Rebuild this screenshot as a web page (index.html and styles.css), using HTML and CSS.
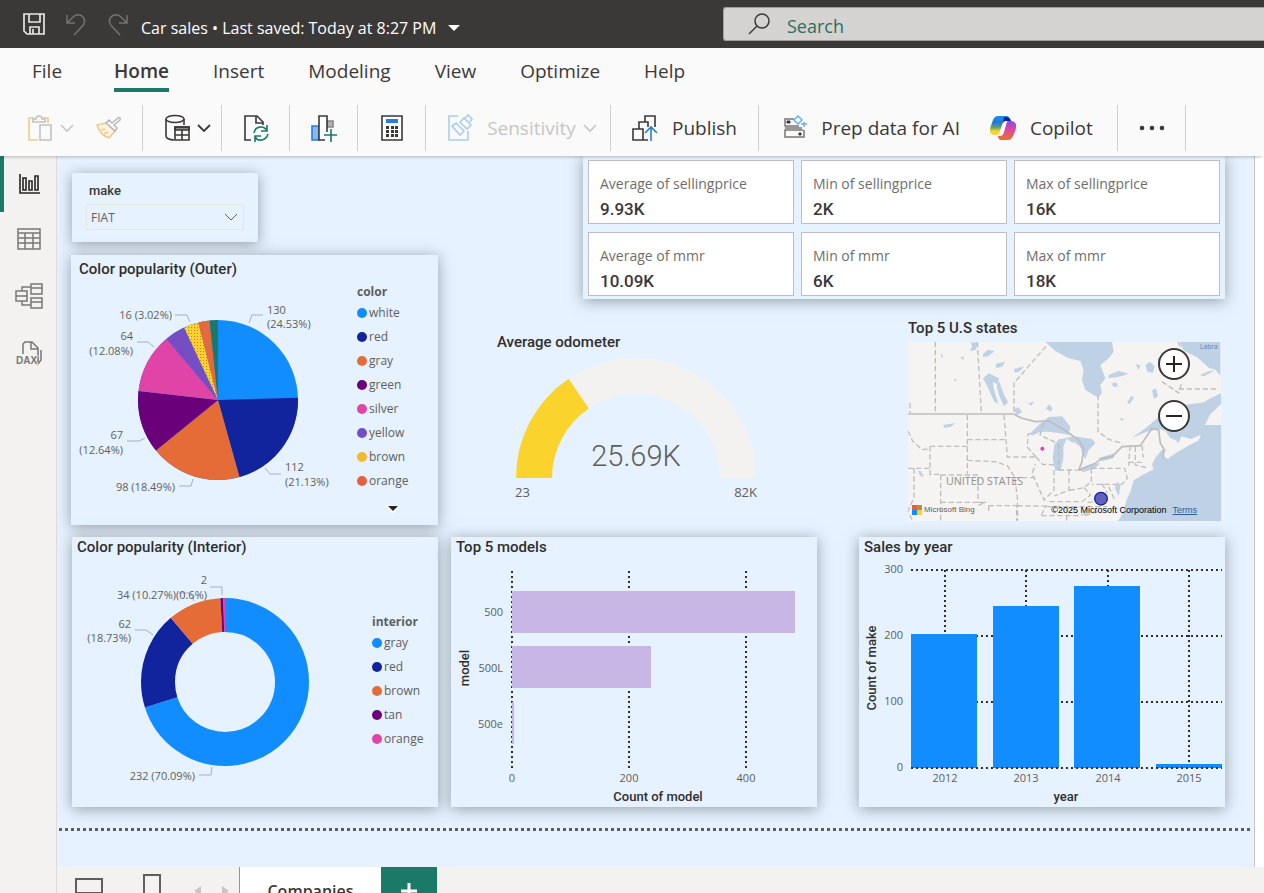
FILE: index.html
```html
<!DOCTYPE html>
<html lang="en">
<head>
<meta charset="UTF-8">
<title>Car sales</title>
<link rel="stylesheet" href="styles.css">
</head>
<body>
<header class="titlebar">
  <button class="tb-btn" aria-label="Save">
    <svg width="24" height="24" viewBox="0 0 24 24" fill="none" stroke="#e6e6e6" stroke-width="1.700"><path d="M2 2h20v20H5l-3-3zM7 2v8h11V2M8 22v-7h9v7M11 17v5"/></svg>
  </button>
  <button class="tb-btn" aria-label="Undo">
    <svg width="22" height="24" viewBox="0 0 22 24" fill="none" stroke="#767372" stroke-width="1.500"><path d="M2 3v8h8M2 11l6-6c3-3 7-3 9.500-.5 3 3 2.500 7 0 9.500L9 23"/></svg>
  </button>
  <button class="tb-btn" aria-label="Redo">
    <svg width="22" height="24" viewBox="0 0 22 24" fill="none" stroke="#767372" stroke-width="1.500"><path d="M19 3v8h-8M19 11l-6-6c-3-3-7-3-9.500-.5-3 3-2.500 7 0 9.500L12 23"/></svg>
  </button>
  <button class="file-name">Car sales • Last saved: Today at 8:27 PM
    <svg width="12" height="6" viewBox="0 0 12 6"><path d="M0 0h12L6 6z" fill="#fff"/></svg>
  </button>
  <label class="search">
    <svg width="24" height="24" viewBox="0 0 24 24" fill="none" stroke="#3b3838" stroke-width="1.500"><circle cx="14" cy="9" r="7"/><path d="M9 14L1 22"/></svg>
    <input type="text" placeholder="Search" aria-label="Search">
  </label>
</header>

<nav class="tabs">
  <a href="#">File</a>
  <a href="#" class="active">Home</a>
  <a href="#">Insert</a>
  <a href="#">Modeling</a>
  <a href="#">View</a>
  <a href="#">Optimize</a>
  <a href="#">Help</a>
</nav>

<div class="toolbar">
  <div class="group group-clip">
    <button class="tool" aria-label="Paste">
      <svg width="26" height="28" viewBox="0 0 26 28" fill="none" stroke-width="1.600"><path d="M7 4H2v22h9M15 4h6v5" stroke="#ecca8e"/><path d="M6 8V5h3c0-4 6-4 6 0h3v3zM13 11h11v15H13z" stroke="#c4c2c0"/></svg>
      <svg class="chev" width="14" height="9" viewBox="0 0 14 9" fill="none" stroke="#c8c6c4" stroke-width="1.600"><path d="M1 1l6 6 6-6"/></svg>
    </button>
    <button class="tool" aria-label="Format painter">
      <svg width="26" height="24" viewBox="0 0 26 24" fill="none" stroke-width="1.500"><path d="M10 7L1 9c2 7 6 11 12 13l6-7z" fill="#fdf3df" stroke="#ecca8e"/><path d="M5 14l4-1M8 18l4-2" stroke="#ecca8e"/><path d="M10 7l9 8 2-3-3-3 6-5c1-2-1-3-2-2l-6 5-3-3z" stroke="#b9b7b5" fill="#fafafa"/></svg>
    </button>
  </div>
  <div class="group group-data">
    <button class="tool" aria-label="Get data">
      <svg width="26" height="28" viewBox="0 0 26 28" fill="none" stroke="#3b3838" stroke-width="1.600"><ellipse cx="11" cy="5" rx="9" ry="3.500"/><path d="M2 5v17c0 2 3 4 8 4M20 5v6"/><path d="M11 13h14v3H11z" fill="#8a8886"/><path d="M11 13h14v13H11zM18 16v10M11 21h14"/></svg>
      <svg class="chev" width="14" height="9" viewBox="0 0 14 9" fill="none" stroke="#3b3838" stroke-width="1.800"><path d="M1 1l6 6 6-6"/></svg>
    </button>
  </div>
  <div class="group">
    <button class="tool" aria-label="Refresh">
      <svg width="26" height="28" viewBox="0 0 26 28" fill="none" stroke="#3b3838" stroke-width="1.600"><path d="M8 26H2V2h12l6 6v3M13 2v7h7"/><path d="M11 19c1-7 10-8 13-2M24 11v6h-6M25 20c-2 7-10 8-13 3M12 28v-6h6" stroke="#1a7a67"/></svg>
    </button>
  </div>
  <div class="group">
    <button class="tool" aria-label="New visual">
      <svg width="26" height="28" viewBox="0 0 26 28" fill="none" stroke-width="1.600"><path d="M1 12h7v14H1z" fill="#83b9eb" stroke="#2b7cd3"/><path d="M16 7h6v6h-6z" fill="#b3b0ad" stroke="#8a8886"/><path d="M14 26H8V2h8v16" fill="#fff" stroke="#3b3838"/><path d="M20 15v13M13 21h13" stroke="#1a7a67"/></svg>
    </button>
  </div>
  <div class="group">
    <button class="tool" aria-label="Quick measure">
      <svg width="22" height="28" viewBox="0 0 22 28"><path d="M1 2h20v24H1z" fill="#fff" stroke="#3b3838" stroke-width="1.600"/><path d="M5 5h12v4H5z" fill="#2b7cd3"/><path d="M5 12h3v3H5zM10 12h3v3h-3zM14 12h3v3h-3zM5 16h3v3H5zM10 16h3v3h-3zM14 16h3v3h-3zM5 20h3v3H5zM10 20h3v3h-3zM14 20h3v3h-3z" fill="#3b3838"/></svg>
    </button>
  </div>
  <div class="group group-sens">
    <button class="tool disabled" disabled>
      <svg width="26" height="28" viewBox="0 0 26 28" fill="none" stroke="#a9cdf0" stroke-width="1.600"><path d="M11 2H2v24h19V17"/><path d="M5 12l4-3 8 8-4 4zM13 8l4-4 7 7-4 4zM18 4l3-3 4 4-2 3"/></svg>
      <span>Sensitivity</span>
      <svg class="chev" width="14" height="9" viewBox="0 0 14 9" fill="none" stroke="#c8c6c4" stroke-width="1.600"><path d="M1 1l6 6 6-6"/></svg>
    </button>
  </div>
  <div class="group">
    <button class="tool">
      <svg width="26" height="28" viewBox="0 0 26 28" fill="none" stroke="#3b3838" stroke-width="1.600"><path d="M1 15h10v11H1zM7 15V8h9v5M13 8V2h10v11M11 26h5"/><path d="M19 27V14M13 19l6-6 6 6" stroke="#2b7cd3"/></svg>
      <span>Publish</span>
    </button>
  </div>
  <div class="group group-ai">
    <button class="tool">
      <svg width="24" height="26" viewBox="0 0 24 26" fill="none" stroke="#797775" stroke-width="1.500"><path d="M11 4H2v7h14M20 15H2v7h19v-7M2 13h17"/><path d="M4 6h3v2H4zM16 18h2v2h-2z" fill="#3b3838" stroke="#3b3838" stroke-width="1"/><path d="M15 1l4 4-4 4-4-4z" stroke="#6aaef0"/><path d="M21 7v5M18 9h6" stroke="#6aaef0"/></svg>
      <span>Prep data for AI</span>
    </button>
    <button class="tool">
      <svg width="26" height="24" viewBox="0 0 26 24">
        <defs>
          <linearGradient id="cpA" x1="0" y1="0" x2="0" y2="1"><stop offset="0" stop-color="#1b8df0"/><stop offset=".35" stop-color="#2476d8"/><stop offset=".6" stop-color="#5fa36a"/><stop offset=".8" stop-color="#fad42c"/></linearGradient>
          <linearGradient id="cpB" x1="0" y1="0" x2="0" y2="1"><stop offset="0" stop-color="#8a50d8"/><stop offset=".45" stop-color="#e044a7"/><stop offset=".9" stop-color="#ea6a35"/></linearGradient>
        </defs>
        <path d="M18 5h3c4 0 6 3 5 7-1 4-2 6-3 8-1 2-2 4-5 4h-7c-2 0-3-2-3-4h2c2 0 3-1 4-4l2-7c1-3 1-4 2-4z" fill="url(#cpB)"/>
        <path d="M8 0h8c3 0 4 2 5 5h-5c-2 0-3 1-4 4l-2 6c-1 3-2 4-4 4H4c-3 0-5-3-4-6 1-4 2-6 3-9 1-2 2-4 5-4z" fill="url(#cpA)"/>
        <path d="M14 1h2c3 0 4 2 5 4h-5c-1 0-2 0-3 2z" fill="#12239e"/>
      </svg>
      <span>Copilot</span>
    </button>
  </div>
  <div class="group">
    <button class="tool" aria-label="More options">
      <svg width="26" height="6" viewBox="0 0 26 6" fill="#3b3838"><circle cx="3" cy="3" r="2.300"/><circle cx="13" cy="3" r="2.300"/><circle cx="23" cy="3" r="2.300"/></svg>
    </button>
  </div>
</div>

<div class="workspace">
  <aside class="rail">
    <button class="active" aria-label="Report view">
      <svg width="22" height="22" viewBox="0 0 22 22" fill="none" stroke="#252423" stroke-width="1.600"><path d="M2 1v19h20M5 5h3v12H5zM11 8h3v9h-3zM17 3h3v14h-3z"/></svg>
    </button>
    <button aria-label="Table view">
      <svg width="24" height="24" viewBox="0 0 24 24" fill="none" stroke="#797775" stroke-width="1.500"><path d="M1 1h22v20H1zM1 5h22M1 10h22M1 15h22M8 5v16M16 5v16"/></svg>
    </button>
    <button aria-label="Model view">
      <svg width="28" height="28" viewBox="0 0 28 28" fill="none" stroke="#797775" stroke-width="1.500"><path d="M1 9h11v10H1zM1 14h11M16 2h11v10H16zM16 6h11M16 16h11v10H16zM16 20h11M7 9V5h9M7 19v4h9"/></svg>
    </button>
    <button aria-label="DAX query view">
      <svg width="26" height="30" viewBox="0 -4 26 30" fill="none" stroke="#797775" stroke-width="1.500"><path d="M7 13V3l2-2h7l6 6v13l-3 2M15 1v7h7M25 9v10l-4 5"/><text x="0" y="23" class="dax">DAX</text></svg>
    </button>
  </aside>

  <main class="page">
    <div class="canvas">
      <div class="upper">
        <div class="left">
          <section class="card slicer">
            <label for="make">make</label>
            <div class="select">
              <select id="make"><option>FIAT</option></select>
              <svg width="14" height="9" viewBox="0 0 14 9" fill="none" stroke="#605e5c"><path d="M1 1l6 6 6-6"/></svg>
            </div>
          </section>

          <section class="card outer">
            <h2>Color popularity (Outer)</h2>
            <div class="with-legend">
              <svg class="chart" viewBox="-147 -121 286 246">
                <defs>
                  <pattern id="brownDots" width="3" height="3" patternUnits="userSpaceOnUse"><path d="M0 0h3v3H0z" fill="#fad42c"/><path d="M0 0h1v1H0z" fill="#e66c37"/></pattern>
                </defs>
                <!-- one unit of pathLength per car, the disc below shows through as white (130) -->
                <circle r="80" fill="#118dff"/>
                <g class="pie" transform="rotate(-90)">
                  <circle r="40" pathLength="530" stroke="#12239e" stroke-dasharray="112 418" stroke-dashoffset="-130"/>
                  <circle r="40" pathLength="530" stroke="#e66c37" stroke-dasharray="98 432" stroke-dashoffset="-242"/>
                  <circle r="40" pathLength="530" stroke="#6b007b" stroke-dasharray="67 463" stroke-dashoffset="-340"/>
                  <circle r="40" pathLength="530" stroke="#e044a7" stroke-dasharray="64 466" stroke-dashoffset="-407"/>
                  <circle r="40" pathLength="530" stroke="#744ec2" stroke-dasharray="22 508" stroke-dashoffset="-471"/>
                  <circle r="40" pathLength="530" stroke="url(#brownDots)" stroke-dasharray="16 514" stroke-dashoffset="-493"/>
                  <circle r="40" pathLength="530" stroke="#e4693f" stroke-dasharray="12 518" stroke-dashoffset="-509"/>
                  <circle r="40" pathLength="530" stroke="#1a7a67" stroke-dasharray="9 521" stroke-dashoffset="-521"/>
                </g>
                <path class="leader" d="M-43-85h12l3 7M-81-58h11l6 5M-91 41h12l6-3M-39 86h12l2-7M47 68l5 6h11M31-77l3-8h11"/>
                <text x="49" y="-86">130</text><text x="49" y="-72">(24.53%)</text>
                <text x="67" y="71">112</text><text x="67" y="86">(21.13%)</text>
                <g class="end">
                  <text x="-43" y="91">98 (18.49%)</text>
                  <text x="-95" y="39">67</text><text x="-95" y="54">(12.64%)</text>
                  <text x="-85" y="-60">64</text><text x="-85" y="-45">(12.08%)</text>
                  <text x="-46" y="-81">16 (3.02%)</text>
                </g>
              </svg>
              <div class="legend">
                <h3>color</h3>
                <ul>
                  <li class="c-blue">white</li>
                  <li class="c-navy">red</li>
                  <li class="c-orange">gray</li>
                  <li class="c-purple">green</li>
                  <li class="c-pink">silver</li>
                  <li class="c-violet">yellow</li>
                  <li class="c-yellow">brown</li>
                  <li class="c-rust">orange</li>
                </ul>
                <button class="more" aria-label="More colors"><svg width="16" height="8" viewBox="0 0 16 8"><path d="M0 0h16L8 8z" fill="#fff"/><path d="M3 1h10L8 6z" fill="#252423"/></svg></button>
              </div>
            </div>
          </section>
        </div>

        <div class="right">
          <section class="kpis">
            <div class="kpi"><span>Average of sellingprice</span><b>9.93K</b></div>
            <div class="kpi"><span>Min of sellingprice</span><b>2K</b></div>
            <div class="kpi"><span>Max of sellingprice</span><b>16K</b></div>
            <div class="kpi"><span>Average of mmr</span><b>10.09K</b></div>
            <div class="kpi"><span>Min of mmr</span><b>6K</b></div>
            <div class="kpi"><span>Max of mmr</span><b>18K</b></div>
          </section>

          <div class="middle">
            <section class="gauge">
              <h2>Average odometer</h2>
              <svg class="chart" viewBox="-144 -126 288 150">
                <g fill="none" stroke-width="36" transform="rotate(180)">
                  <circle r="102" pathLength="200" stroke="#f3f2f1" stroke-dasharray="100 100"/>
                  <circle r="102" pathLength="200" stroke="#fad42c" stroke-dasharray="31 169"/>
                </g>
                <text x="0" y="-12" class="callout">25.69K</text>
                <text x="-121" y="19" class="range">23</text>
                <text x="121" y="19" class="range range-max">82K</text>
              </svg>
            </section>

            <section class="states">
              <h2>Top 5 U.S states</h2>
              <div class="map">
                <svg viewBox="58 81 939 537">
                  <path d="M58 81h939v537H58z" fill="#f5f4f3"/>
                  <g fill="#bfd1e4">
                    <path d="M470 81l30 27 40 22 35 8 10 27-5 30 10 30 25 15 13 7 12-12-5-25 15-20-15-40 25-20 15-20-5-29z"/>
                    <path d="M872 81l14 26 39 20 20 17 15 14 20 6 15 18V81z"/>
                    <path d="M997 235l-32 15-20 12-40 6-25 2-40 22-25 10-45 38-40 28 45-18 40-8 15 6 15 22 15 5 10 10-25 15-25 4-20 24-10 20 5 15-35 18-25 15-10 35-10 20-12 40-10 20-15 14h342z"/>
                    <path d="M425 355l25-25 30-24 40-2 25 31-5 25-25-5-35-5-25 0-25 12zM500 467l-8-37 5-40 13-17 24-4-10 26 0 35-8 36zM530 370l25-6 55 8 10 13-20 20-10 28-9-18-8-22-25-13zM565 464l35-14 35-6-15 15-35 12zM628 430l52-16-5 15-35 10z"/>
                    <path d="M283 190l18-15 30 15-2 20-16-10 2 20 14 46-12-6-20-44zM332 200l14 40 12 22-12 12-14-30-8-30zM246 82l20 2-4 20-18 4 6-14zM282 118l16-14 20 4-20 16-14 2zM322 146l26-6-6 14-20 6zM376 162l30-8-12 14-16 6zM408 258l12 6 16-4-8 12zM472 280l10-12 10 14-8 8zM376 282l14-6 10 16-16 8zM660 180l30-12 30 8-22 8-38 6zM668 206l14-4 6 12-12 2zM716 262l12-20 8 6-14 20zM790 226l12-6 6 24-12 8zM770 150l14-10 14 14-6 20-16-4zM806 132l14-12 4 18-12 4zM742 146l14 6-8 14zM694 308l12 4-8 6zM164 330l36-6-14 12-20 2zM88 466l10 4 8 16-12-4zM156 112l8 14-6 2zM686 500l10 10-6 34-12-26zM194 190l10 4-4 6zM215 128l12-4-4 12zM934 180l28-12 18-2-34 18z"/>
                  </g>
                  <g fill="#f5f4f3">
                    <path d="M822 422l14-24 34-14 8-20 28 8 30-12-6 16-38 20-34 20-20 16z"/>
                    <path d="M948 330l18-34 16-14 15-16v64zM850 342l32-8-8 16z"/>
                    <path d="M540 425l2-36 16-8 20 22-4 36-12 18-24 4z"/>
                  </g>
                  <path class="country" d="M58 297h317l25 13 40 10 40-2 40 22 50 35 15 25-5 40-10 25 50-20 20-15 30-5 30-30 55-3 35-52 20 5 5 40 10 15-1 30"/>
                  <path class="state" d="M140 81v213M266 81l12 213M472 94l-96 110v94M628 240v110l30 22 44 14M64 264v30M58 348l14 30 28 26 24-2M124 394h112M236 300v176M236 374h118M346 300l10 126h86M236 436l84 4 36 12 22 34 8 60 1 70M124 394v84h32M58 460h66M156 480h112v84M76 460v88l-18 40 14 30M156 480v138M156 562h142M268 562h20l-20 10M300 572h84v46M300 572v20M386 572l90 2M442 426l20 22 34 2M442 426l-26-30 2-38 20-6M464 324l-10 36 42 20 14 10M510 385v80M496 465v60l-30 30-22-50-10-20-4-8 10-30M440 488h-56M541 465v60l-44 18M608 460v40l-22 18-44 8M510 465h54M608 460h100l8 30-16 18h-90M586 518l20 22-26 20h-106M640 506l16 28M458 600l16-30M476 575h180M534 600v18M458 602h110l30-8M724 392l-4 60M740 395v55l34 8M760 392l4 36M720 442h44M636 560l-40 2M660 515l20 44M628 590l-40 12M820 200l30 20 20 14 10-34M870 222h120M868 81l8 16"/>
                  <circle cx="461" cy="401" r="6" fill="#e044a7"/>
                  <circle cx="637" cy="551" r="19" fill="#6361bb" stroke="#12239e" stroke-width="4"/>
                  <text x="172" y="511" class="map-label">UNITED STATES</text>
                  <text x="934" y="102" class="map-sea">Labra</text>
                </svg>
                <div class="zoom">
                  <button aria-label="Zoom in"><svg width="18" height="18" viewBox="0 0 18 18" stroke="#252423" stroke-width="2"><path d="M9 1v16M1 9h16"/></svg></button>
                  <button aria-label="Zoom out"><svg width="18" height="18" viewBox="0 0 18 18" stroke="#252423" stroke-width="2"><path d="M1 9h16"/></svg></button>
                </div>
                <div class="credits">
                  <svg width="10" height="10" viewBox="0 0 10 10"><path d="M0 0h5v5H0z" fill="#e8602c"/><path d="M5 0h5v5H5z" fill="#b08d57"/><path d="M0 5h5v5H0z" fill="#118dff"/><path d="M5 5h5v5H5z" fill="#fad42c"/></svg>
                  <span class="bing">Microsoft Bing</span>
                  <span class="copy">©2025 Microsoft Corporation</span>
                  <a href="#">Terms</a>
                </div>
              </div>
            </section>
          </div>
        </div>
      </div>

      <div class="lower">
        <section class="card">
          <h2>Color popularity (Interior)</h2>
          <div class="with-legend">
            <svg class="chart" viewBox="-153 -125 300 250">
              <g class="donut" transform="rotate(-90)">
                <circle r="67" pathLength="331" stroke="#118dff" stroke-dasharray="232 99"/>
                <circle r="67" pathLength="331" stroke="#12239e" stroke-dasharray="62 269" stroke-dashoffset="-232"/>
                <circle r="67" pathLength="331" stroke="#e66c37" stroke-dasharray="34 297" stroke-dashoffset="-294"/>
                <circle r="67" pathLength="331" stroke="#6b007b" stroke-dasharray="2 329" stroke-dashoffset="-328"/>
                <circle r="67" pathLength="331" stroke="#e044a7" stroke-dasharray="1 330" stroke-dashoffset="-330"/>
              </g>
              <path class="leader" d="M-15-95h12v8M-90-52h11l7 5M-26 93h12l1-8M-46-89h12l3 8"/>
              <g class="end">
                <text x="-18" y="-98">2</text><text x="-18" y="-83">(0.6%)</text>
                <text x="-49" y="-83">34 (10.27%)</text>
                <text x="-94" y="-54">62</text><text x="-94" y="-40">(18.73%)</text>
                <text x="-30" y="98">232 (70.09%)</text>
              </g>
            </svg>
            <div class="legend interior">
              <h3>interior</h3>
              <ul>
                <li class="c-blue">gray</li>
                <li class="c-navy">red</li>
                <li class="c-orange">brown</li>
                <li class="c-purple">tan</li>
                <li class="c-pink">orange</li>
              </ul>
            </div>
          </div>
        </section>

        <section class="card">
          <h2>Top 5 models</h2>
          <svg class="chart" viewBox="0 0 366 250">
            <path class="grid" d="M61 14v198M178 14v198M295 14v198"/>
            <g fill="#c8b6e6">
              <rect x="61" y="34" width="283" height="42"/>
              <rect x="61" y="89" width="139" height="42"/>
              <rect x="61" y="145" width="2" height="42"/>
            </g>
            <g class="end">
              <text x="52" y="59">500</text>
              <text x="52" y="115">500L</text>
              <text x="52" y="171">500e</text>
            </g>
            <g class="mid">
              <text x="61" y="225">0</text>
              <text x="178" y="225">200</text>
              <text x="295" y="225">400</text>
              <text x="207" y="244" class="axis">Count of model</text>
              <text transform="translate(18 111) rotate(-90)" class="axis">model</text>
            </g>
          </svg>
        </section>

        <section class="card last">
          <h2>Sales by year</h2>
          <svg class="chart" viewBox="0 0 366 250">
            <path class="grid" d="M52 13h311M52 79h311M52 145h311M86 13v198M167 13v198M249 13v198M330 13v198"/>
            <g fill="#118dff">
              <rect x="52" y="77" width="66" height="134"/>
              <rect x="134" y="49" width="66" height="162"/>
              <rect x="215" y="29" width="66" height="182"/>
              <rect x="297" y="207" width="66" height="4"/>
            </g>
            <path class="grid" d="M52 211h311"/>
            <g class="end">
              <text x="44" y="16">300</text>
              <text x="44" y="82">200</text>
              <text x="44" y="148">100</text>
              <text x="44" y="214">0</text>
            </g>
            <g class="mid">
              <text x="86" y="225">2012</text>
              <text x="167" y="225">2013</text>
              <text x="249" y="225">2014</text>
              <text x="330" y="225">2015</text>
              <text x="207" y="244" class="axis">year</text>
              <text transform="translate(17 111) rotate(-90)" class="axis">Count of make</text>
            </g>
          </svg>
        </section>
      </div>
      <div class="page-edge"></div>
    </div>

    <footer class="pages">
      <button class="view" aria-label="Desktop layout"><svg width="28" height="28" viewBox="0 0 28 28" fill="none" stroke="#605e5c" stroke-width="2"><path d="M1 2h26v14H1zM14 16v7M7 24h14"/></svg></button>
      <button class="view" aria-label="Mobile layout"><svg width="20" height="34" viewBox="0 0 20 34" fill="none" stroke="#605e5c" stroke-width="2"><path d="M2 1h16v30H2z"/></svg></button>
      <button class="step" aria-label="Previous page"><svg width="7" height="10" viewBox="0 0 7 10"><path d="M7 0v10L0 5z" fill="#c8c6c4"/></svg></button>
      <button class="step" aria-label="Next page"><svg width="7" height="10" viewBox="0 0 7 10"><path d="M0 0v10l7-5z" fill="#c8c6c4"/></svg></button>
      <button class="page-tab">Companies</button>
      <button class="add" aria-label="New page"><svg width="16" height="16" viewBox="0 0 16 16" stroke="#fff" stroke-width="3"><path d="M8 0v16M0 8h16"/></svg></button>
    </footer>
  </main>
</div>
</body>
</html>
```
FILE: styles.css
```css
* {
  box-sizing: border-box;
}
body {
  margin: 0;
  height: 100vh;
  overflow: hidden;
  font-family: "Open Sans", "Noto Sans", sans-serif;
  color: #3b3838;
  background: #fafafa;
}
button {
  font: inherit;
  color: inherit;
  background: none;
  border: 0;
  padding: 0;
}
h2, h3, ul {
  margin: 0;
  padding: 0;
}
svg {
  flex: none;
}

/* title bar */
.titlebar {
  display: flex;
  align-items: center;
  height: 48px;
  padding-left: 22px;
  background: #3b3838;
}
.tb-btn {
  display: flex;
  width: 24px;
  margin-right: 19px;
}
.file-name {
  display: flex;
  align-items: center;
  gap: 12px;
  padding-top: 7px;
  color: #fff;
  font-size: 16px;
  white-space: nowrap;
}
.tb-btn + .file-name {
  margin-left: -10px;
}
.search {
  display: flex;
  align-items: center;
  flex: none;
  width: 541px;
  height: 34px;
  margin-left: auto;
  padding-left: 24px;
  gap: 15px;
  background: #d5d3d1;
  border: 1px solid #a19f9d;
  border-right: 0;
  border-radius: 3px 0 0 3px;
}
.search input {
  flex: 1;
  border: 0;
  padding: 3px 0 0;
  background: none;
  font: inherit;
  font-size: 18px;
}
.search input::placeholder {
  color: #27705f;
  opacity: 1;
}

/* ribbon */
.tabs {
  display: flex;
  gap: 44px;
  height: 50px;
  padding: 8px 32px 0;
}
.tabs a {
  height: 36px;
  line-height: 30px;
  font-size: 19px;
  color: inherit;
  text-decoration: none;
}
.tabs a:first-child {
  margin-right: 8px;
}
.tabs .active {
  font-weight: 600;
  border-bottom: 4px solid #1a7a67;
}
.toolbar {
  display: grid;
  grid-template-columns: 143px 79px 68px 68px 68px 185px 148px 359px 68px;
  height: 58px;
  padding: 7px 0 5px;
  position: relative;
  z-index: 1;
  background: #fafafa;
  box-shadow: 0 3px 3px -2px rgba(0, 0, 0, .25);
}
.group {
  display: flex;
  align-items: center;
  justify-content: center;
  border-right: 1px solid #d2d0ce;
}
.group-clip {
  gap: 22px;
  padding-left: 7px;
}
.group-data {
  padding-left: 11px;
}
.group-sens {
  padding-left: 8px;
}
.group-ai {
  gap: 30px;
}
.tool {
  display: flex;
  align-items: center;
  gap: 14px;
  font-size: 19px;
  white-space: nowrap;
}
.tool .chev {
  margin-left: -7px;
}
.disabled {
  color: #c8c6c4;
}

/* left rail */
.workspace {
  display: flex;
}
.rail {
  width: 57px;
  flex: none;
  background: #f3f2f1;
  border-right: 1px solid #dddbd9;
}
.rail button {
  display: flex;
  align-items: center;
  justify-content: center;
  width: 100%;
  height: 56px;
  padding-right: 3px;
  border-left: 4px solid transparent;
}
.rail .active {
  border-color: #1a7a67;
}
.dax {
  font: 700 10px "Liberation Sans", sans-serif;
  fill: #797775;
  stroke: #f3f2f1;
  paint-order: stroke;
}

/* report canvas */
.page {
  flex: 1;
  min-width: 0;
  background: #fff;
}
.canvas {
  margin-right: 9px;
  padding: 0 29px 36px 14px;
  background: #e6f2ff;
  border-right: 1px solid #c8c6c4;
  overflow: hidden;
}
.card {
  background: #e6f2ff;
  box-shadow: 0 2px 14px rgba(80, 90, 95, .55);
}
h2 {
  padding: 0 5px;
  font: 500 15px/20px Roboto, sans-serif;
  color: #302e2d;
}
.upper, .middle {
  display: flex;
}
.left {
  flex: 0 0 367px;
  padding-top: 17px;
}
.slicer {
  width: 186px;
  height: 69px;
  margin: 0 0 13px 1px;
  padding: 9px 14px;
  border-radius: 2px;
}
.slicer label {
  display: block;
  padding-left: 3px;
  font: 500 13px/18px Roboto, sans-serif;
}
.select {
  display: flex;
  align-items: center;
  margin-top: 4px;
  padding-right: 5px;
  border: 1px solid #e6e4e0;
}
.select select {
  flex: 1;
  height: 24px;
  padding: 0 4px;
  appearance: none;
  background: none;
  border: 0;
  font: 12px "Open Sans", sans-serif;
  color: #605e5c;
}
.outer {
  padding-top: 4px;
}
.outer h2 {
  padding-left: 8px;
}
.chart {
  display: block;
  width: 100%;
  fill: #605e5c;
  font-size: 11px;
}
.with-legend {
  display: flex;
}
.with-legend .chart {
  flex: 1;
  min-width: 0;
}
.pie {
  fill: none;
  stroke-width: 80px;
}
.donut {
  fill: none;
  stroke-width: 34px;
}
.leader {
  fill: none;
  stroke: #a6b0b8;
}
.end {
  text-anchor: end;
}
.mid {
  text-anchor: middle;
}
.axis {
  font: 500 13px Roboto, sans-serif;
  fill: #302e2d;
}
.grid {
  fill: none;
  stroke: #302e2d;
  stroke-width: 2px;
  stroke-dasharray: 2 3;
}

.legend {
  flex: 0 0 81px;
  padding-top: 4px;
  color: #605e5c;
}
.legend h3 {
  font-size: 12px;
  line-height: 18px;
}
.legend ul {
  list-style: none;
  font-size: 12px;
  line-height: 24px;
}
.legend li {
  display: flex;
  align-items: center;
  gap: 2px;
}
.legend li::before {
  content: "";
  width: 10px;
  height: 10px;
  border-radius: 50%;
  background: currentColor;
}
.legend .c-blue::before { background: #118dff; }
.legend .c-navy::before { background: #12239e; }
.legend .c-orange::before { background: #e66c37; }
.legend .c-purple::before { background: #6b007b; }
.legend .c-pink::before { background: #e044a7; }
.legend .c-violet::before { background: #744ec2; }
.legend .c-yellow::before { background: #f3ba2f; }
.legend .c-rust::before { background: #e4603f; }
.legend .more {
  display: block;
  margin: 10px 0 0 28px;
  line-height: 8px;
}
.legend.interior {
  flex-basis: 66px;
  padding-top: 56px;
}

/* cards on the right */
.right {
  flex: 1;
  min-width: 0;
}
.kpis {
  display: grid;
  grid-template-columns: 1fr 1fr 1fr;
  gap: 8px 7px;
  margin-left: 145px;
  padding: 4px 5px 3px;
  background: #e6f2ff;
  box-shadow: 0 2px 14px rgba(80, 90, 95, .55);
}
.kpi {
  height: 64px;
  padding: 11px;
  background: #fff;
  border: 1px solid #c0bebc;
}
.kpi span, .kpi b {
  display: block;
}
.kpi span {
  font-size: 14px;
  line-height: 24px;
  color: #706e6c;
}
.kpi b {
  font: 500 17px/26px Roboto, sans-serif;
}
.middle {
  justify-content: space-between;
  padding: 19px 4px 0 54px;
}
.gauge {
  width: 288px;
  padding-top: 14px;
}
.callout {
  font: 300 29px Roboto, sans-serif;
  text-anchor: middle;
}
.range {
  font-size: 13px;
}
.range-max {
  text-anchor: end;
}
.states {
  width: 313px;
}
.states h2 {
  padding: 0 0 4px;
}
.map {
  position: relative;
}
.map > svg {
  display: block;
  width: 100%;
}
.country {
  fill: none;
  stroke: #bfbdbb;
  stroke-width: 5px;
}
.state {
  fill: none;
  stroke: #c0bebc;
  stroke-width: 4px;
  stroke-dasharray: 16 8;
}
.map-label {
  font-size: 32px;
  fill: #8f8d8b;
}
.map-sea {
  font-size: 20px;
  fill: #5f86ad;
}
.zoom {
  position: absolute;
  top: 6px;
  right: 31px;
  display: grid;
  gap: 20px;
}
.zoom button {
  display: flex;
  align-items: center;
  justify-content: center;
  width: 32px;
  height: 32px;
  background: #fff;
  border: 2px solid #3b3838;
  border-radius: 50%;
}
.credits {
  position: absolute;
  left: 4px;
  right: 24px;
  bottom: 4px;
  display: flex;
  align-items: center;
  gap: 2px;
  font: 9px/14px "Liberation Sans", sans-serif;
  white-space: nowrap;
}
.bing {
  font-size: 8px;
  color: #605e5c;
}
.copy {
  margin-left: auto;
  color: #000;
}
.credits a {
  margin-left: 4px;
  color: #2f5f9e;
}

.lower {
  display: flex;
  gap: 13px;
  margin-top: 12px;
  padding-left: 1px;
}
.lower .card {
  flex: 1;
  min-width: 0;
}
.lower .last {
  margin-left: 29px;
}
.page-edge {
  height: 3px;
  margin: 21px -27px 0 -12px;
  background: repeating-linear-gradient(90deg, #605e5c 0 3px, transparent 3px 6px);
}

/* page tabs */
.pages {
  display: flex;
  height: 48px;
  background: #f3f2f1;
}
.pages button {
  display: flex;
  align-items: center;
  justify-content: center;
}
.pages .view {
  width: 63px;
}
.pages .step {
  width: 28px;
}
.pages .page-tab {
  width: 142px;
  background: #fff;
  border-left: 1px solid #979593;
  font-size: 16px;
  font-weight: 600;
}
.pages .add {
  width: 56px;
  background: #1a7a67;
}
```
